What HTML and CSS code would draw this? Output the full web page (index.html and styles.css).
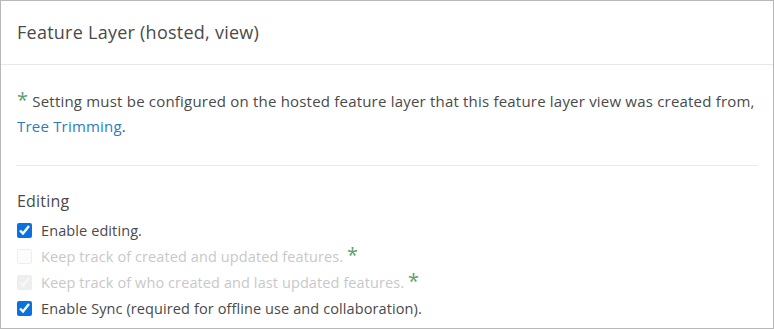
FILE: index.html
```html
<!DOCTYPE html>
<html lang="en">
<head>
    <meta charset="UTF-8">
    <title>Feature Layer settings</title>
    <link rel="stylesheet" href="styles.css">
</head>
<body>
    <div class="panel">
        <div class="panel-header">Feature Layer (hosted, view)</div>
        <div class="panel-body">
            <p class="note">
                <span class="star">*</span> Setting must be configured on the hosted feature layer that this feature layer view was created from,
                <a href="#">Tree Trimming</a>.
            </p>
            <div class="section">
                <div class="section-title">Editing</div>
                <label class="check">
                    <input type="checkbox" checked>
                    <span>Enable editing.</span>
                </label>
                <label class="check disabled">
                    <input type="checkbox" disabled>
                    <span><span class="muted">Keep track of created and updated features.</span> <span class="star">*</span></span>
                </label>
                <label class="check disabled">
                    <input type="checkbox" checked disabled>
                    <span><span class="muted">Keep track of who created and last updated features.</span> <span class="star">*</span></span>
                </label>
                <label class="check">
                    <input type="checkbox" checked>
                    <span>Enable Sync (required for offline use and collaboration).</span>
                </label>
            </div>
        </div>
    </div>
</body>
</html>
```

FILE: styles.css
```css
body {
    margin: 0;
    background: #fff;
    font-family: "Open Sans", sans-serif;
    color: #4a4a4a;
}

.panel {
    width: 772px;
    height: 327px;
    border: 1px solid #b8b8b8;
    overflow: hidden;
}

.panel-header {
    height: 63px;
    line-height: 63px;
    padding: 0 16px;
    font-size: 18px;
    letter-spacing: 0.25px;
    border-bottom: 1px solid #e8e8e8;
}

.panel-body {
    padding: 0 15px;
}

.note {
    margin: 0;
    padding: 24px 1px 26px;
    font-size: 15px;
    letter-spacing: 0.2px;
    line-height: 25px;
    border-bottom: 1px solid #ebebeb;
}

.note a {
    color: #2d7cc2;
    text-decoration: none;
}

.star {
    color: #5e9e6e;
    font-size: 20px;
    line-height: 0;
}

.section {
    padding: 24px 1px 0;
}

.section-title {
    font-size: 16px;
    letter-spacing: 0.2px;
    line-height: 22px;
    margin-bottom: 5px;
}

.check {
    display: flex;
    align-items: center;
    gap: 9px;
    height: 26px;
    font-size: 14.5px;
    letter-spacing: 0.1px;
}

.check + .check {
    margin-top: 0.3px;
}

.check input {
    width: 15px;
    height: 15px;
    margin: 0;
    accent-color: #0a72e0;
}

.check .muted {
    color: #c8c8c8;
}

.check.disabled input {
    opacity: 0.35;
}
```
